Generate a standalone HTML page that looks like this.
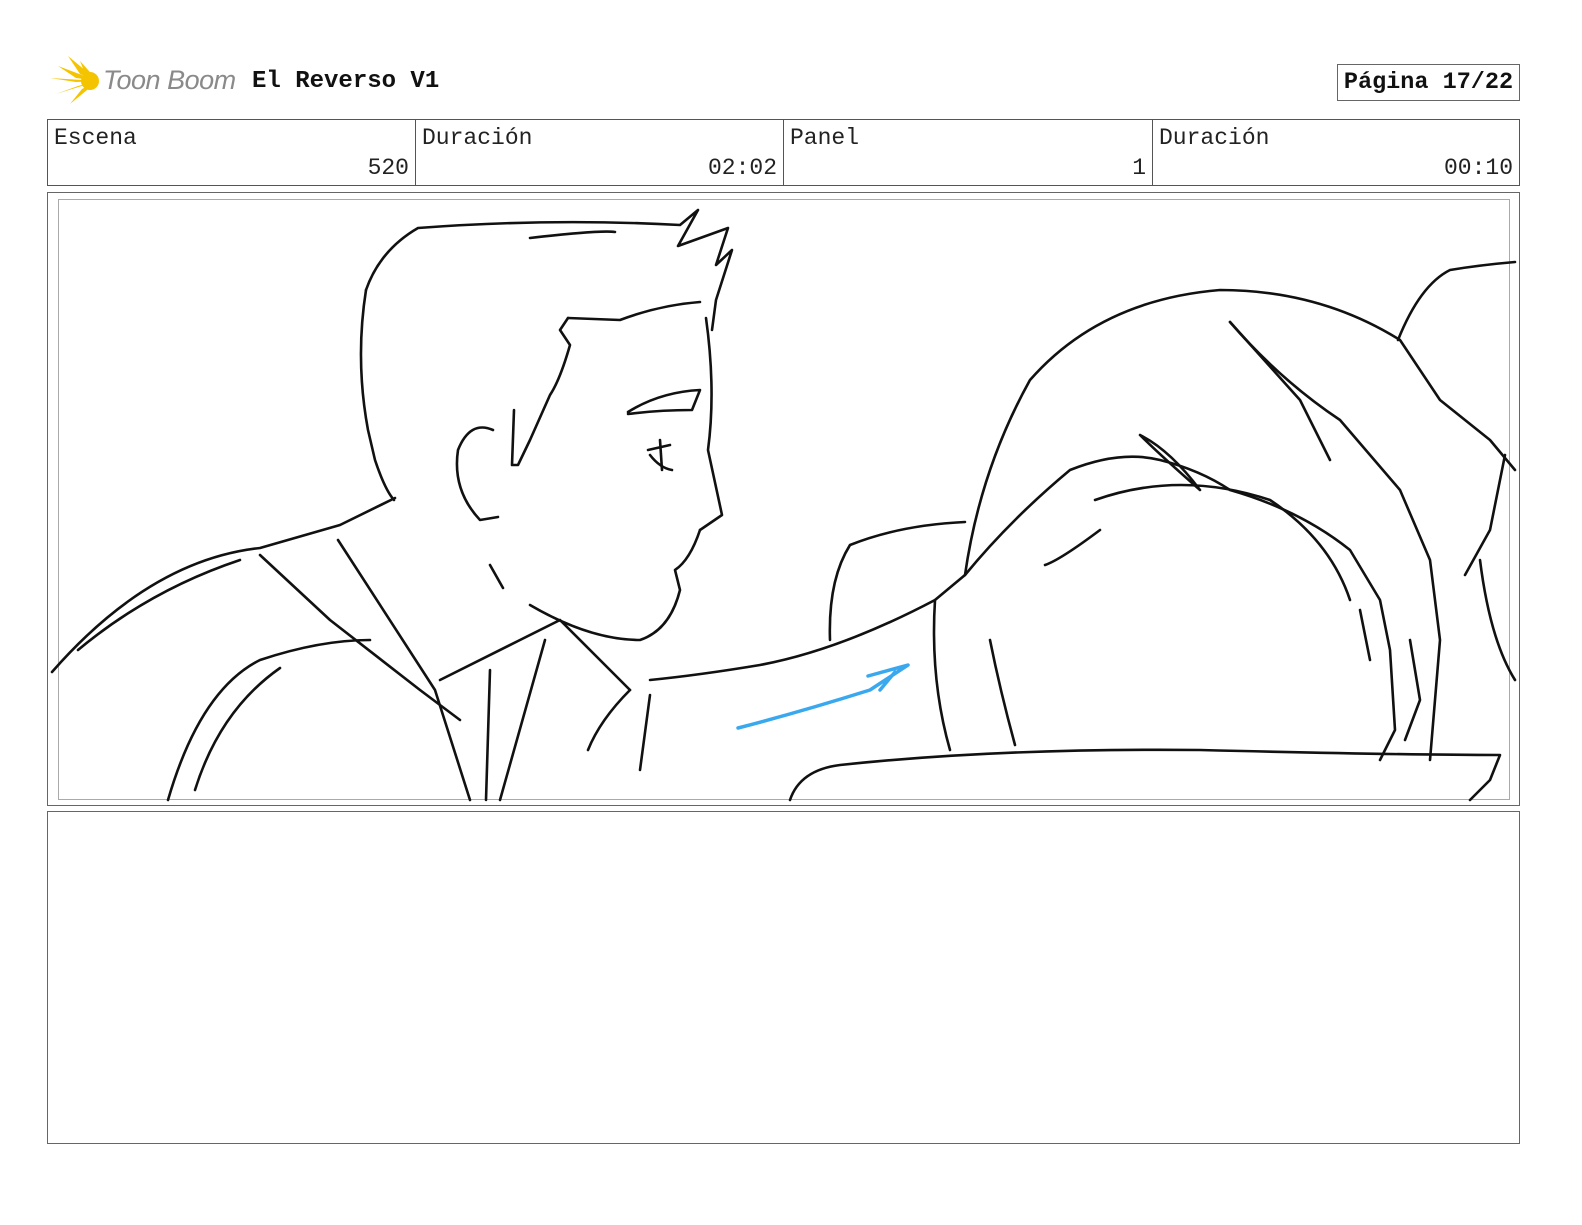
<!DOCTYPE html>
<html><head><meta charset="utf-8"><style>
body{margin:0;width:1582px;height:1225px;background:#fff;position:relative;overflow:hidden;font-family:"Liberation Mono",monospace;}
.a{position:absolute;}
.cell{position:absolute;top:119px;height:67px;border:1px solid #555;box-sizing:border-box;font-size:23px;color:#222;}
.cell .l{position:absolute;left:6px;top:5px;}
.cell .v{position:absolute;right:6px;top:35px;}
</style></head><body>
<svg class="a" style="left:48px;top:56px" width="56" height="50" viewBox="0 0 56 50">
<g fill="#f5c400"><path d="M50 25 L20 0 L32 18 Z"/><path d="M50 25 L10 10 L28 22 Z"/><path d="M50 25 L2 22 L28 26 Z"/><path d="M50 25 L8 38 L30 30 Z"/><path d="M50 25 L22 48 L34 33 Z"/><path d="M50 25 L32 5 L38 20 Z"/><circle cx="42" cy="25" r="9"/></g>
</svg>
<div class="a" style="left:103px;top:65px;font-family:'Liberation Sans',sans-serif;font-style:italic;font-size:27px;color:#8a8a8a;letter-spacing:-0.5px">Toon Boom</div>
<div class="a" style="left:252px;top:68px;font-size:24px;font-weight:bold;color:#111">El Reverso V1</div>
<div class="a" style="left:1337px;top:64px;width:183px;height:37px;border:1px solid #666;box-sizing:border-box;font-size:23.5px;font-weight:bold;line-height:35px;text-align:center;color:#111">Página 17/22</div>
<div class="cell" style="left:47px;width:369px"><span class="l">Escena</span><span class="v">520</span></div>
<div class="cell" style="left:415px;width:369px"><span class="l">Duración</span><span class="v">02:02</span></div>
<div class="cell" style="left:783px;width:370px"><span class="l">Panel</span><span class="v">1</span></div>
<div class="cell" style="left:1152px;width:368px"><span class="l">Duración</span><span class="v">00:10</span></div>
<div class="a" style="left:47px;top:192px;width:1473px;height:614px;border:1px solid #666;box-sizing:border-box"></div>
<div class="a" style="left:58px;top:199px;width:1452px;height:601px;border:1px solid #aaa;box-sizing:border-box"></div>
<div class="a" style="left:47px;top:811px;width:1473px;height:333px;border:1px solid #666;box-sizing:border-box"></div>
<svg class="a" style="left:0;top:0" width="1582" height="1225">
<defs><clipPath id="c"><rect x="49" y="194" width="1469" height="608"/></clipPath></defs>
<g clip-path="url(#c)" fill="none" stroke="#111" stroke-width="2.6" stroke-linecap="round" stroke-linejoin="round">
<path d="M366 290 Q380 250 418 228 Q550 218 680 225 L698 210 L678 246 L728 228 L716 265 L732 250 L716 300 L712 330"/>
<path d="M530 238 Q600 230 615 232"/>
<path d="M366 290 Q355 360 368 430 L375 460 Q385 490 394 500"/>
<path d="M568 318 L560 330 L570 345 Q560 380 550 395 L530 440 L518 465 L512 465 L514 410"/>
<path d="M568 318 L620 320 Q660 305 700 302"/>
<path d="M706 318 Q716 390 708 450 L722 515 L700 530"/>
<path d="M493 430 Q470 420 458 450 Q452 490 480 520 L498 517"/>
<path d="M628 412 Q660 392 700 390 L692 410 Q660 410 628 414"/>
<path d="M648 450 L670 445 M660 440 L662 470 M650 455 Q660 468 672 470"/>
<path d="M700 530 Q690 560 675 570 L680 590 Q670 630 640 640 Q590 640 530 605"/>
<path d="M490 565 L503 588"/>
<path d="M52 672 Q150 560 260 548 L340 525 L395 498"/>
<path d="M78 650 Q150 590 240 560"/>
<path d="M338 540 L435 690 L470 800"/>
<path d="M260 555 L330 620 L420 690 L460 720"/>
<path d="M168 800 Q200 690 260 660 Q320 640 370 640"/>
<path d="M195 790 Q220 710 280 668"/>
<path d="M440 680 L520 640 L560 620 L630 690"/>
<path d="M490 670 L486 800 M545 640 L500 800"/>
<path d="M650 680 Q700 675 760 665 Q840 650 935 600 L965 575"/>
<path d="M630 690 Q600 720 588 750 M650 695 L640 770"/>
<path d="M830 640 Q828 580 850 545 Q900 525 965 522"/>
<path d="M965 575 Q980 470 1030 380 Q1100 300 1220 290 Q1320 290 1400 340 L1440 400 L1490 440 L1515 470"/>
<path d="M1398 340 Q1420 285 1450 270 Q1480 265 1515 262"/>
<path d="M1230 322 Q1280 380 1340 420 L1400 490 L1430 560 L1440 640 L1430 760"/>
<path d="M1230 322 L1300 400 L1330 460"/>
<path d="M1505 455 L1490 530 L1465 575"/>
<path d="M935 600 Q930 680 950 750"/>
<path d="M965 575 Q1010 520 1070 470 Q1120 450 1160 460 Q1200 470 1230 490 Q1300 510 1350 550 L1380 600 L1390 650 L1395 730 L1380 760"/>
<path d="M1140 435 Q1170 450 1200 490 Q1160 455 1140 435"/>
<path d="M1100 530 Q1060 560 1045 565"/>
<path d="M990 640 Q1000 690 1015 745"/>
<path d="M1095 500 Q1180 470 1270 500 Q1330 540 1350 600"/>
<path d="M1360 610 L1370 660 M1410 640 L1420 700 L1405 740"/>
<path d="M1515 680 Q1490 640 1480 560"/>
<path d="M790 800 Q800 770 840 765 Q1000 748 1200 750 Q1400 755 1500 755 L1490 780 L1470 800"/>
</g>
<path d="M738 728 Q800 712 870 690 L908 665 L868 676 M895 672 L880 690" fill="none" stroke="#3aa8ee" stroke-width="3.5" stroke-linecap="round" stroke-linejoin="round"/>
</svg>
</body></html>
